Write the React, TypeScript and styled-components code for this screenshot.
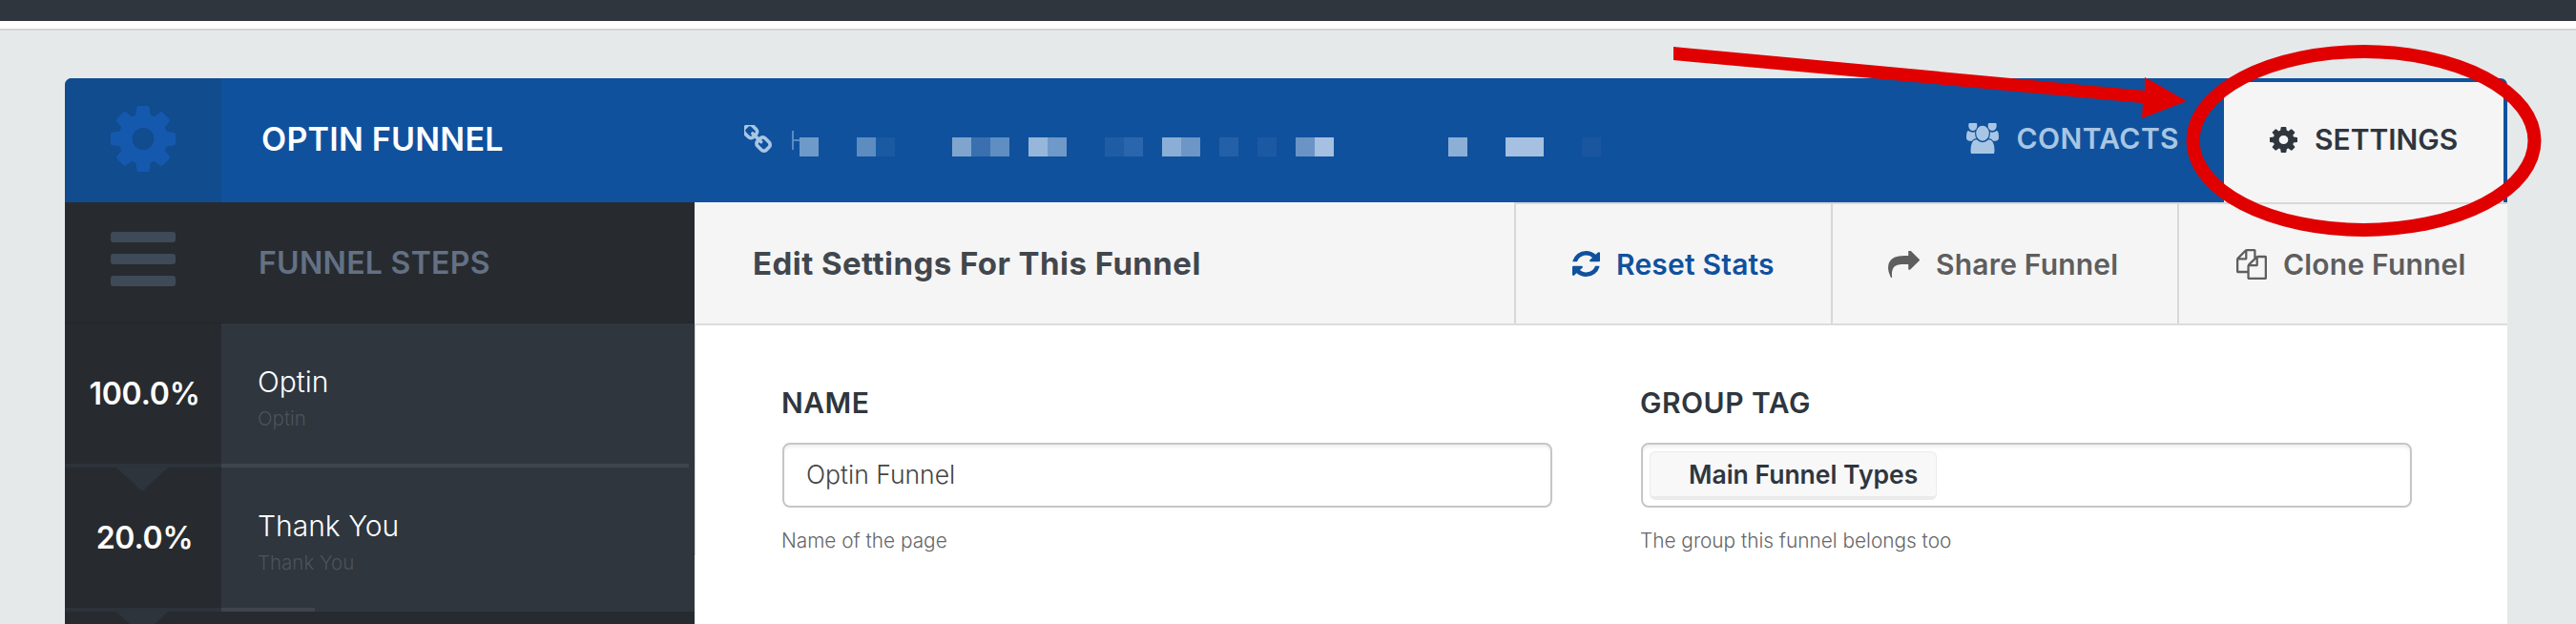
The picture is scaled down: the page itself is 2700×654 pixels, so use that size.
import React from 'react';
import styled, { createGlobalStyle } from 'styled-components';

const GlobalStyle = createGlobalStyle`
  html, body {
    margin: 0;
    padding: 0;
    height: 654px;
    overflow: hidden;
    background: #e6e9ea;
    font-family: 'Inter', 'Lato', sans-serif;
  }
  * {
    box-sizing: border-box;
  }
`;

const Page = styled.div`
  position: relative;
  width: 2700px;
  height: 654px;
  overflow: hidden;
`;

const TopBar = styled.div`
  height: 32px;
  background: #fff;
  border-top: 22px solid #2f363e;
  border-bottom: 2px solid #d5d5d5;
`;

const Main = styled.div`
  padding: 50px 72px 0 68px;
`;

const Card = styled.div`
  border-radius: 7px 7px 0 0;
  overflow: hidden;
  height: 600px;
  background: #fff;
`;

const Header = styled.header`
  display: flex;
  height: 130px;
  background: #10519d;
`;

const HeaderIconCell = styled.div`
  display: flex;
  align-items: center;
  justify-content: center;
  width: 164px;
  padding-bottom: 3px;
  background: #104c8e;
  color: #1559ae;
`;

const FunnelTitle = styled.h1`
  margin: 0 0 3px;
  width: 548px;
  padding-left: 42px;
  align-self: center;
  font-size: 34px;
  font-weight: 600;
  letter-spacing: 0.25px;
  color: #fff;
`;

const UrlRow = styled.div`
  display: flex;
  align-items: flex-start;
  flex: 1;
  color: #a8c6e3;
  padding-top: 49px;
`;

const UrlStem = styled.span`
  width: 8px;
  height: 20px;
  margin: 6px 0 0 21px;
  border-left: 2px solid #5a8ac0;
  background: linear-gradient(#5a8ac0, #5a8ac0) 0 9px / 100% 2px no-repeat;
`;

const UrlMosaic = styled.div`
  display: flex;
  margin-top: 13px;
`;

const MosaicCell = styled.span<{ $tone: string }>`
  width: 20px;
  height: 20px;
  background: ${(p) => p.$tone};
`;

const ContactsLink = styled.a`
  display: flex;
  align-items: center;
  gap: 19px;
  margin-right: 47px;
  padding-bottom: 4px;
  font-size: 30px;
  font-weight: 600;
  letter-spacing: 0.4px;
  color: #a8c6e3;
`;

const SettingsTab = styled.a`
  display: flex;
  align-items: center;
  gap: 18px;
  width: 293px;
  margin: 4px 4px 0 0;
  padding: 0 0 6px 48px;
  background: #f5f5f5;
  font-size: 30px;
  font-weight: 600;
  color: #2f363e;
`;

const Body = styled.div`
  display: flex;
`;

const Sidebar = styled.aside`
  width: 660px;
  height: 470px;
  background: #272b2f;
`;

const SidebarHead = styled.div`
  display: flex;
  align-items: center;
  height: 127px;
  border-bottom: 1px solid #22262a;
`;

const BurgerCell = styled.div`
  display: flex;
  flex-direction: column;
  align-items: center;
  gap: 12px;
  width: 164px;
  margin-top: -8px;
`;

const BurgerBar = styled.span`
  width: 68px;
  height: 11px;
  border-radius: 3px;
  background: #3f4a58;
`;

const SidebarTitle = styled.h2`
  margin: 0 0 0 39px;
  font-size: 32px;
  font-weight: 600;
  letter-spacing: 0.3px;
  color: #647184;
`;

const Step = styled.div`
  position: relative;
  display: grid;
  grid-template-columns: 164px 1fr;
  grid-template-rows: 1fr 4px;
  height: 151px;
  background: #2f363e;
`;

const Percent = styled.div`
  display: flex;
  align-items: center;
  justify-content: center;
  padding-left: 3px;
  background: #272b2f;
  font-size: 32px;
  font-weight: 600;
  letter-spacing: -0.2px;
  color: #fff;
`;

const StepInfo = styled.div`
  padding: 41px 0 0 38px;
`;

const StepName = styled.div`
  font-size: 30px;
  font-weight: 300;
  line-height: 40px;
  color: #fff;
`;

const StepSlug = styled.div`
  font-size: 20.5px;
  font-weight: 300;
  line-height: 38px;
  color: #4c535b;
`;

const RailStart = styled.div`
  background: #2d3339;
`;

const Rail = styled.div`
  width: 490px;
`;

const RailFill = styled.div`
  height: 4px;
  background: #3e454d;
`;

const StepArrow = styled.span`
  position: absolute;
  left: 54px;
  top: 100%;
  z-index: 1;
  width: 0;
  height: 0;
  border-left: 27px solid transparent;
  border-right: 27px solid transparent;
  border-top: 25px solid #2d343b;
`;

const Content = styled.main`
  flex: 1;
`;

const Toolbar = styled.div`
  display: flex;
  height: 129px;
  background: #f5f5f5;
  border-bottom: 2px solid #dcdcdc;
`;

const ToolbarHeading = styled.h3`
  flex: 1;
  margin: 0;
  padding-left: 61px;
  align-self: center;
  font-size: 33px;
  font-weight: 700;
  letter-spacing: 0.45px;
  color: #42474d;
`;

const ToolButton = styled.a<{ $width: number; $inset: number; $active?: boolean }>`
  display: flex;
  align-items: center;
  gap: 17px;
  width: ${(p) => p.$width}px;
  padding-left: ${(p) => p.$inset}px;
  border-left: 2px solid #d8d8d8;
  border-top: 2px solid #d8d8d8;
  font-size: 30px;
  font-weight: 600;
  letter-spacing: 0.2px;
  color: ${(p) => (p.$active ? '#10519d' : '#5e5e5e')};
`;

const Form = styled.form`
  display: grid;
  grid-template-columns: 807px 808px;
  column-gap: 93px;
  padding: 62px 100px 0 91px;
  border-left: 1px solid #d8d8d8;
`;

const Field = styled.div`
  display: flex;
  flex-direction: column;
`;

const FieldLabel = styled.label`
  margin: 0 0 23px -1px;
  font-size: 30px;
  font-weight: 600;
  letter-spacing: 0.5px;
  line-height: 38px;
  color: #2f363e;
`;

const TextInput = styled.input`
  height: 68px;
  padding: 0 23px 2px;
  border: 2px solid #c6c6c6;
  border-radius: 8px;
  box-shadow: inset 0 3px 3px rgba(0, 0, 0, 0.06);
  font-family: inherit;
  font-size: 26.5px;
  font-weight: 300;
  color: #444;
  outline: none;
`;

const TagField = styled.div`
  display: flex;
  align-items: center;
  height: 68px;
  padding: 0 7px;
  border: 2px solid #c6c6c6;
  border-radius: 8px;
  box-shadow: inset 0 3px 3px rgba(0, 0, 0, 0.06);
`;

const Tag = styled.span`
  display: flex;
  align-items: center;
  height: 51px;
  width: 301px;
  padding-left: 40px;
  border: 1px solid #ebebeb;
  border-bottom-width: 4px;
  border-radius: 6px;
  background: #f8f8f8;
  font-size: 26.5px;
  font-weight: 600;
  color: #2f363e;
`;

const HelpText = styled.div`
  margin: 20px 0 0 -1px;
  font-size: 20.8px;
  font-weight: 300;
  line-height: 30px;
  color: #666;
`;

const Annotation = styled.svg`
  position: absolute;
  inset: 0;
  pointer-events: none;
`;

type GlyphProps = { d: string; size: number; box?: string; height?: number };

const Glyph = ({ d, size, box = '0 0 1792 1792', height }: GlyphProps): React.JSX.Element => (
  <svg width={size} height={height ?? size} viewBox={box} preserveAspectRatio="none" fill="currentColor">
    <path d={d} />
  </svg>
);

const COG =
  'M1152 896q0-106-75-181t-181-75-181 75-75 181 75 181 181 75 181-75 75-181zm512-109v222q0 12-8 23t-20 13l-185 28q-19 54-39 91 35 50 107 138 10 12 10 25t-9 23q-27 37-99 108t-94 71q-12 0-26-9l-138-108q-44 23-91 38-16 136-29 186-7 28-36 28h-222q-14 0-24.500-8.500t-11.500-21.500l-28-184q-49-16-90-37l-141 107q-10 9-25 9-14 0-25-11-126-114-165-168-7-10-7-23 0-12 8-23 15-21 51-66.500t54-70.500q-27-50-41-99l-183-27q-13-2-21-12.500t-8-23.500v-222q0-12 8-23t19-13l186-28q14-46 39-92-40-57-107-138-10-12-10-24 0-10 9-23 26-36 98.500-107.500t94.500-71.500q13 0 26 10l138 107q44-23 91-38 16-136 29-186 7-28 36-28h222q14 0 24.500 8.500t11.500 21.500l28 184q49 16 90 37l142-107q9-9 24-9 13 0 25 10 129 119 165 170 7 8 7 22 0 12-8 23-15 21-51 66.500t-54 70.500q26 50 41 98l183 28q13 2 21 12.500t8 23.500z';
const USERS =
  'M593 896q-162 5-265 128h-134q-82 0-138-40.500t-56-118.500q0-353 124-353 6 0 43.500 21t97.500 42.500 119 21.500q67 0 133-23-5 37-5 66 0 139 81 256zm1071 637q0 120-73 189.500t-194 69.500h-874q-121 0-194-69.500t-73-189.500q0-53 3.500-103.500t14-109 26.500-108.500 43-97.500 62-81 85.500-53.500 111.500-20q10 0 43 21.500t73 48 107 48 135 21.500 135-21.500 107-48 73-48 43-21.500q61 0 111.500 20t85.500 53.500 62 81 43 97.500 26.500 108.500 14 109 3.500 103.500zm-1024-1277q0 106-75 181t-181 75-181-75-75-181 75-181 181-75 181 75 75 181zm704 384q0 159-112.500 271.500t-271.500 112.500-271.500-112.500-112.500-271.500 112.500-271.500 271.500-112.500 271.500 112.500 112.500 271.500zm576 225q0 78-56 118.500t-138 40.500h-134q-103-123-265-128 81-117 81-256 0-29-5-66 66 23 133 23 59 0 119-21.500t97.500-42.500 43.500-21q124 0 124 353zm-128-609q0 106-75 181t-181 75-181-75-75-181 75-181 181-75 181 75 75 181z';
const REFRESH =
  'M1639 1056q0 5-1 7-64 268-268 434.500t-478 166.500q-146 0-282.500-55t-243.500-157l-129 129q-19 19-45 19t-45-19-19-45v-448q0-26 19-45t45-19h448q26 0 45 19t19 45-19 45l-137 137q71 66 161 102t187 36q134 0 250-65t186-179q11-17 53-117 8-23 30-23h192q13 0 22.500 9.500t9.500 22.500zm25-800v448q0 26-19 45t-45 19h-448q-26 0-45-19t-19-45 19-45l138-138q-148-137-349-137-134 0-250 65t-186 179q-11 17-53 117-8 23-30 23h-199q-13 0-22.500-9.500t-9.500-22.500v-7q65-268 270-434.500t480-166.500q146 0 284 55.500t245 156.500l130-129q19-19 45-19t45 19 19 45z';
const SHARE =
  'M1792 640q0 26-19 45l-512 512q-19 19-45 19t-45-19-19-45v-256h-224q-98 0-175.500 6t-154 21.500-133 42.500-105.500 69.500-79.500 103-48.500 142-17.500 187.500q0 55 5 123 0 6 2.500 23.500t2.500 26.500q0 15-8.500 25t-23.500 10q-16 0-28-17-7-9-13-22t-13.500-30-10.500-24q-127-285-127-451 0-199 53-333 162-403 875-403h224v-256q0-26 19-45t45-19 45 19l512 512q19 19 19 45z';
const FILES =
  'M1696 384q40 0 68 28t28 68v1216q0 40-28 68t-68 28h-960q-40 0-68-28t-28-68v-288h-544q-40 0-68-28t-28-68v-672q0-40 20-88t48-76l408-408q28-28 76-48t88-20h416q40 0 68 28t28 68v328q68-40 128-40h416zm-544 213l-299 299h299v-299zm-640-384l-299 299h299v-299zm196 647l316-316v-416h-384v416q0 40-28 68t-68 28h-416v640h512v-256q0-40 20-88t48-76zm956 804v-1152h-384v416q0 40-28 68t-68 28h-416v640h896z';
const LINK =
  'M1456 1216q0-40-28-68l-208-208q-28-28-68-28-42 0-72 32 3 3 19 18.500t21.500 21.500 15 19 13 25.500 3.500 27.500q0 40-28 68t-68 28q-15 0-27.500-3.500t-25.500-13-19-15-21.500-21.500-18.500-19q-33 31-33 73 0 40 28 68l206 207q27 27 68 27 40 0 68-26l147-146q28-28 28-67zm-703-705q0-40-28-68l-206-207q-28-28-68-28-39 0-68 27l-147 146q-28 28-28 67 0 40 28 68l208 208q27 27 68 27 42 0 72-31-3-3-19-18.500t-21.500-21.500-15-19-13-25.500-3.500-27.500q0-40 28-68t68-28q15 0 27.500 3.500t25.500 13 19 15 21.500 21.500 18.500 19q33-31 33-73zm895 705q0 120-85 203l-147 146q-83 83-203 83-121 0-204-85l-206-207q-83-83-83-203 0-123 88-209l-88-88q-86 88-208 88-120 0-204-84l-208-208q-84-84-84-204t85-203l147-146q83-83 203-83 121 0 204 85l206 207q83 83 83 203 0 123-88 209l88 88q86-88 208-88 120 0 204 84l208 208q84 84 84 204z';

// the funnel url is pixelated out in the screenshot
const MOSAIC = [
  '#6e9ac9', '', '', '#5c8cc0', '#1a5aa3', '', '', '', '#7fa5cf', '#3a70b0', '#5f8ec2', '',
  '#96b6da', '#6f99c8', '', '', '#1e5ca6', '#2a66ad', '', '#8aaed6', '#6b96c6', '', '#2460a8', '',
  '#1c59a3', '', '#6a94c5', '#a5c0e0', '', '', '', '', '', '', '#8cafd6', '', '', '#a5c0e0',
  '#a5c0e0', '', '', '#1a56a0',
];

const STEPS = [
  { percent: '100.0%', name: 'Optin', fill: 100 },
  { percent: '20.0%', name: 'Thank You', fill: 20 },
];

const App = (): React.JSX.Element => (
  <Page>
    <GlobalStyle />
    <TopBar />
    <Main>
      <Card>
        <Header>
          <HeaderIconCell>
            <Glyph d={COG} size={68} box="128 128 1536 1536" height={69} />
          </HeaderIconCell>
          <FunnelTitle>OPTIN FUNNEL</FunnelTitle>
          <UrlRow>
            <Glyph d={LINK} size={29} box="144 144 1504 1504" />
            <UrlStem />
            <UrlMosaic>
              {MOSAIC.map((tone, i) => (
                <MosaicCell key={i} $tone={tone || 'transparent'} />
              ))}
            </UrlMosaic>
          </UrlRow>
          <ContactsLink>
            <Glyph d={USERS} size={34} box="0 128 1920 1536" height={32} />
            CONTACTS
          </ContactsLink>
          <SettingsTab>
            <Glyph d={COG} size={29} box="128 128 1536 1536" height={27} />
            SETTINGS
          </SettingsTab>
        </Header>
        <Body>
          <Sidebar>
            <SidebarHead>
              <BurgerCell>
                <BurgerBar />
                <BurgerBar />
                <BurgerBar />
              </BurgerCell>
              <SidebarTitle>FUNNEL STEPS</SidebarTitle>
            </SidebarHead>
            {STEPS.map((step) => (
              <Step key={step.name}>
                <Percent>{step.percent}</Percent>
                <StepInfo>
                  <StepName>{step.name}</StepName>
                  <StepSlug>{step.name}</StepSlug>
                </StepInfo>
                <RailStart />
                <Rail>
                  <RailFill style={{ width: `${step.fill}%` }} />
                </Rail>
                <StepArrow />
              </Step>
            ))}
          </Sidebar>
          <Content>
            <Toolbar>
              <ToolbarHeading>Edit Settings For This Funnel</ToolbarHeading>
              <ToolButton $width={332} $inset={59} $active>
                <Glyph d={REFRESH} size={29} box="128 128 1536 1536" height={27} />
                Reset Stats
              </ToolButton>
              <ToolButton $width={363} $inset={58}>
                <Glyph d={SHARE} size={33} box="0 128 1792 1536" height={28} />
                Share Funnel
              </ToolButton>
              <ToolButton $width={346} $inset={60}>
                <Glyph d={FILES} size={32} box="0 0 1792 1792" height={32} />
                Clone Funnel
              </ToolButton>
            </Toolbar>
            <Form>
              <Field>
                <FieldLabel>NAME</FieldLabel>
                <TextInput readOnly value="Optin Funnel" />
                <HelpText>Name of the page</HelpText>
              </Field>
              <Field>
                <FieldLabel>GROUP TAG</FieldLabel>
                <TagField>
                  <Tag>Main Funnel Types</Tag>
                </TagField>
                <HelpText>The group this funnel belongs too</HelpText>
              </Field>
            </Form>
          </Content>
        </Body>
      </Card>
    </Main>
    <Annotation width="2700" height="654" viewBox="0 0 2700 654">
      <polygon
        points="1754,49 2248,95 2248,81 2292,106 2245,124 2246,108 1754,63"
        fill="#e00000"
      />
      <ellipse cx="2477.5" cy="147.5" rx="179" ry="93.5" fill="none" stroke="#e00000" strokeWidth="14" />
    </Annotation>
  </Page>
);

export default App;
